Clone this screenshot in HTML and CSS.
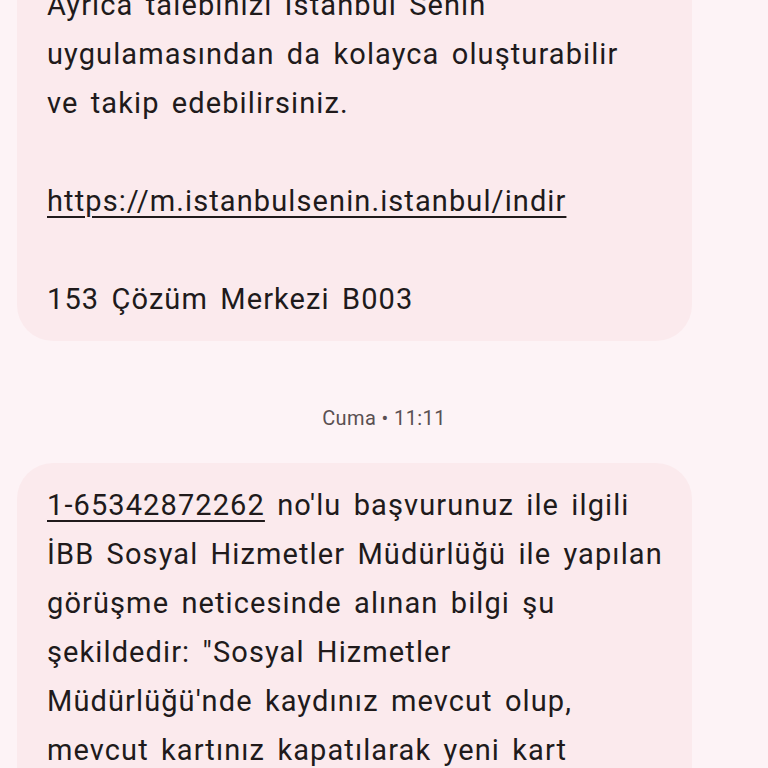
FILE: index.html
```html
<!DOCTYPE html>
<html lang="tr">
<head>
<meta charset="utf-8">
<link rel="stylesheet" href="styles.css">
</head>
<body>
<div class="thread">
  <div class="bubble">
    <p>Ayrıca talebinizi İstanbul Senin<br>uygulamasından da kolayca oluşturabilir<br>ve takip edebilirsiniz.</p>
    <p class="gap"><a class="link">https://m.istanbulsenin.istanbul/indir</a></p>
    <p class="gap">153 Çözüm Merkezi B003</p>
  </div>
  <div class="stamp">Cuma • 11:11</div>
  <div class="bubble">
    <p><a class="link">1-65342872262</a> no'lu başvurunuz ile ilgili<br>İBB Sosyal Hizmetler Müdürlüğü ile yapılan<br>görüşme neticesinde alınan bilgi şu<br>şekildedir: "Sosyal Hizmetler<br>Müdürlüğü'nde kaydınız mevcut olup,<br>mevcut kartınız kapatılarak yeni kart<br>tanımlanmıştır."</p>
  </div>
</div>
</body>
</html>
```
FILE: styles.css
```css
html, body {
  margin: 0;
  padding: 0;
  background: #fdf3f6;
  overflow: hidden;
  height: 768px;
}
.thread {
  margin-top: -37px;
  padding: 0 76px 0 17px;
  font-family: Roboto, "Noto Sans", sans-serif;
  color: #201a1b;
}
.bubble {
  background: #fbeaed;
  border-radius: 36px;
  padding: 18px 20px 17px 30px;
  font-size: 29px;
  line-height: 49px;
  letter-spacing: 1.1px;
  word-spacing: 4px;
  white-space: nowrap;
}
.bubble p {
  margin: 0;
}
.bubble p.gap {
  margin-top: 49px;
}
.link {
  text-decoration: underline;
  text-underline-offset: 5px;
  text-decoration-thickness: 2px;
}
.stamp {
  text-align: center;
  font-size: 20px;
  letter-spacing: 0.4px;
  color: #5a5052;
  line-height: 28px;
  padding: 63px 0 31px;
  margin-left: 59px;
}
```
